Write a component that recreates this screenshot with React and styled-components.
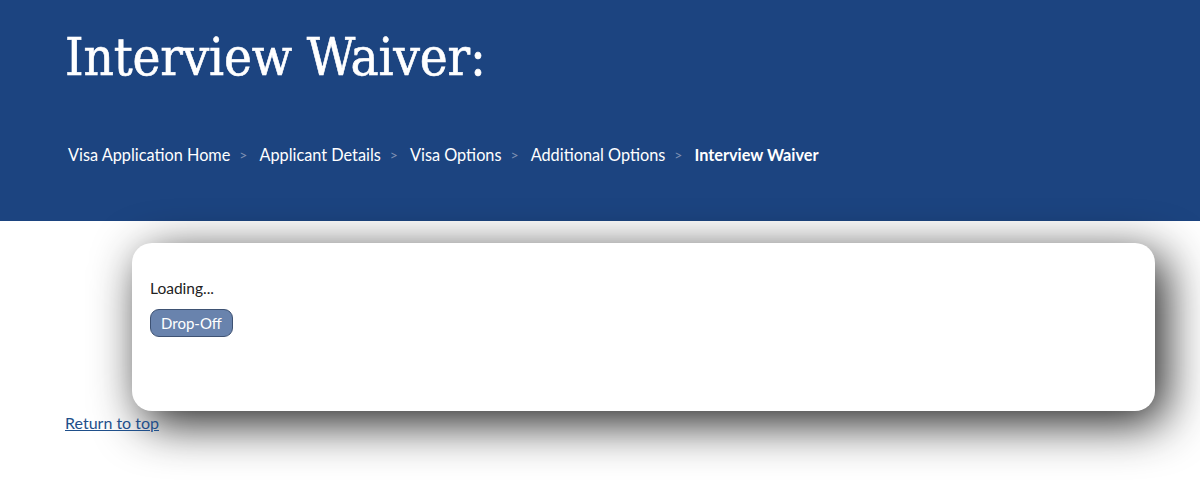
import React from "react";
import styled, { createGlobalStyle } from "styled-components";

const Global = createGlobalStyle`
  html, body { margin: 0; padding: 0; background: #ffffff; }
  body { font-family: "Lato", "Liberation Sans", sans-serif; }
`;

const Header = styled.header`
  background: #1c4480;
  height: 221px;
  box-sizing: border-box;
  padding: 24px 65px 0 65px;
  display: flex;
  flex-direction: column;
`;

const Title = styled.h1`
  margin: 0;
  font-family: "DejaVu Serif", "Liberation Serif", serif;
  font-stretch: condensed;
  font-weight: 400;
  font-size: 52.5px;
  line-height: 66px;
  color: #ffffff;
  -webkit-text-stroke: 0.6px #ffffff;
  letter-spacing: -0.2px;
`;

const Crumbs = styled.nav`
  margin-top: 53px;
  display: flex;
  align-items: center;
  font-family: "Lato", "Liberation Sans", sans-serif;
  font-size: 16.3px;
  line-height: 24px;
  color: #ffffff;
`;

const Crumb = styled.span`
  font-weight: ${(p) => (p.$current ? 700 : 400)};
  margin-left: 3px;
`;

const Sep = styled.span`
  color: #7f91b3;
  font-size: 14px;
  margin: 0 9px 0 9px;
`;

const Main = styled.main`
  padding: 22px 45px 80px 65px;
`;

const Card = styled.section`
  margin-left: 67px;
  height: 168px;
  box-sizing: border-box;
  background: #ffffff;
  border-radius: 20px;
  box-shadow: 10px 12px 48px rgba(0, 0, 0, 0.88);
  padding: 34px 18px;
  display: flex;
  flex-direction: column;
  align-items: flex-start;
  gap: 10px;
`;

const Loading = styled.div`
  font-family: "Lato", "Liberation Sans", sans-serif;
  font-size: 15.5px;
  line-height: 22px;
  color: #222222;
`;

const Button = styled.button`
  font-family: "Lato", "Liberation Sans", sans-serif;
  font-size: 15px;
  color: #ffffff;
  background: #6983ad;
  border: 1px solid #3e5273;
  border-radius: 9px;
  height: 28px;
  padding: 0 10px;
`;

const TopLink = styled.a`
  display: inline-block;
  margin-top: 2px;
  font-family: "Lato", "Liberation Sans", sans-serif;
  font-size: 16px;
  color: #1f4f8a;
  text-decoration: underline;
`;

const items = ["Visa Application Home", "Applicant Details", "Visa Options", "Additional Options"];

export default function App() {
  return (
    <>
      <Global />
      <Header>
        <Title>Interview Waiver:</Title>
        <Crumbs>
          {items.map((t) => (
            <React.Fragment key={t}>
              <Crumb>{t}</Crumb>
              <Sep>&gt;</Sep>
            </React.Fragment>
          ))}
          <Crumb $current>Interview Waiver</Crumb>
        </Crumbs>
      </Header>
      <Main>
        <Card>
          <Loading>Loading...</Loading>
          <Button type="button">Drop-Off</Button>
        </Card>
        <TopLink href="#top">Return to top</TopLink>
      </Main>
    </>
  );
}
